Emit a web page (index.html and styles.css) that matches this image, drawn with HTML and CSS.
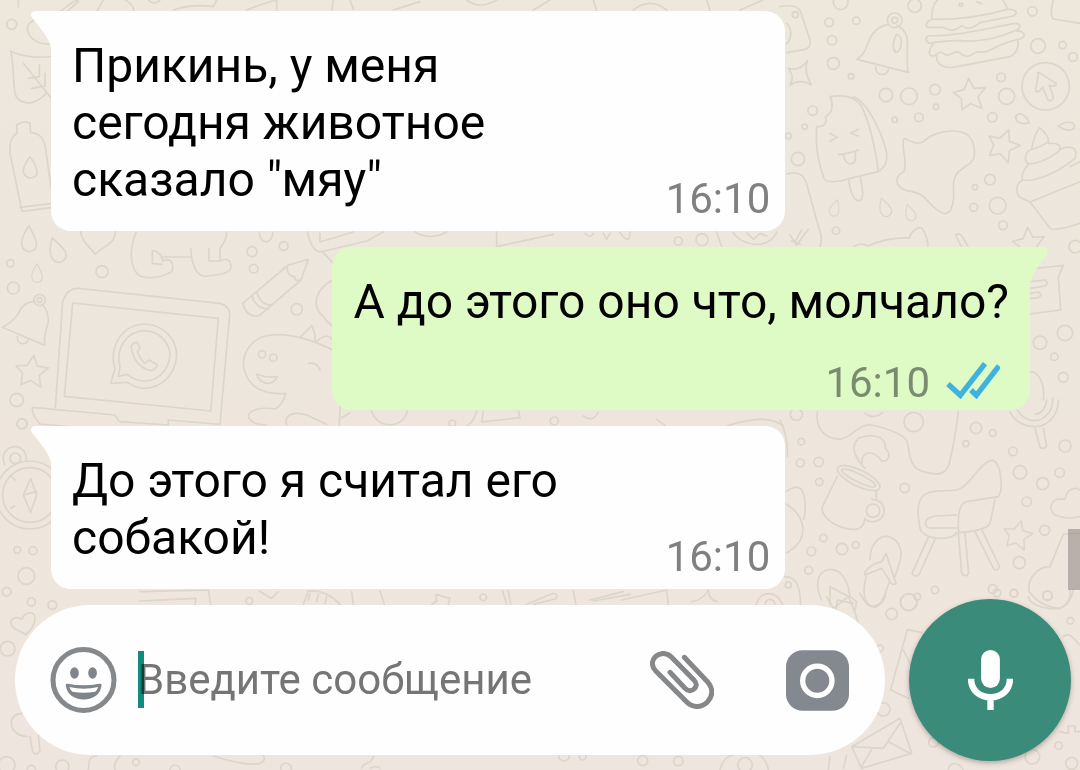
FILE: index.html
```html
<!DOCTYPE html>
<html lang="ru">
<head>
<meta charset="utf-8">
<meta name="viewport" content="width=device-width, initial-scale=1">
<title>Чат</title>
<link rel="stylesheet" href="styles.css">
</head>
<body>
<svg class="wallpaper" viewBox="0 0 3240 2310" preserveAspectRatio="xMidYMid slice" aria-hidden="true">
  <defs>
    <path id="star" d="M-2-48L14-18L48-20L26 8L38 42L4 28L-22 46L-24 12L-48-6L-16-14Z"/>
    <path id="drop" d="M0-40C-14-18-23-4-22 14C-20 32-8 38 2 38C16 36 24 26 22 10C18-8 8-22 0-40Z"/>
  </defs>
  <!-- upper left: leaf, bottle -->
  <g>
    <circle cx="35" cy="73" r="15"/>
    <path d="M55 0V20M165 50C110 48 80 65 82 90C90 120 120 135 150 132M180 35L220 5L235 0M200 35L235 5M290 35L310 0M375 0C395 10 402 20 402 35M445 0C455 12 470 12 480 0M520 30Q580 10 640 20L650 0M740 30Q790 10 830 0V32M1000 0L995 30M1050 0L1060 28M1180 30L1260 5M1400 0Q1440 30 1490 0M1600 30L1650 0M1780 0L1790 32M1900 30Q1950 -10 2000 30M2120 0L2130 32M2220 30L2290 0"/>
    <path d="M32 154Q90 180 160 168M32 154C42 190 38 240 45 280C50 300 70 312 95 308C120 300 130 290 140 278L160 300M70 190L158 300M85 235L118 230V195M95 265L135 258V220"/>
    <path d="M52 400L50 375Q70 360 90 370L92 398M52 400C32 410 28 430 30 460L66 634L160 622M92 398C120 400 130 415 136 440L158 600M60 622L158 610M90 470C75 490 66 510 72 522Q90 545 110 525C114 505 102 485 90 470Z"/>
  </g>
  <!-- upper right: bell, burger, ice cream, cupcake -->
  <g transform="translate(2340 0)">
    <path d="M0 20Q50 10 62 35L90 120Q94 142 75 148L20 158M20 70Q45 100 20 132M25 205Q60 215 82 182Q70 215 94 254Q60 235 30 255Q45 230 25 205"/>
    <circle cx="46" cy="44" r="9"/><circle cx="182" cy="7" r="22"/><circle cx="147" cy="67" r="13"/><circle cx="229" cy="62" r="11"/><circle cx="156" cy="121" r="14"/><circle cx="160" cy="190" r="18"/><circle cx="213" cy="229" r="8"/><circle cx="404" cy="17" r="20"/><circle cx="344" cy="61" r="22"/><circle cx="344" cy="61" r="9"/>
    <path d="M322 74C285 82 270 108 258 145Q250 165 231 178L385 217C375 170 388 130 380 108C372 90 360 80 350 76M287 200C285 230 325 230 325 207M350 102C335 130 338 150 348 158C368 150 370 110 350 102Z"/>
    <path d="M455 58C455 30 462 10 472 0M668 0Q680 15 682 28M455 58Q570 60 682 28C710 26 715 40 700 48L600 68C580 85 560 90 545 76C525 95 505 92 490 82L445 82C432 76 440 66 455 58M445 108C540 108 620 85 705 70C722 70 725 82 710 90Q620 130 540 122Q500 120 450 130C435 126 435 112 445 108M710 92C736 95 740 110 720 117C680 125 650 140 630 150C610 165 600 150 585 158C565 175 550 170 535 155C515 155 505 175 490 160C475 150 465 170 460 168C440 168 448 145 460 132M470 168C468 195 495 208 530 200L690 170C710 160 716 140 714 120"/>
    <path d="M538 10h10v8h-10ZM590 5l15 6"/>
    <circle cx="757" cy="34" r="14"/><circle cx="774" cy="138" r="22"/><circle cx="848" cy="135" r="11"/><circle cx="879" cy="171" r="13"/>
    <path d="M820 0Q808 45 820 57L900 70"/>
    <circle cx="797" cy="259" r="71"/>
    <path d="M775 222Q770 216 778 218L828 250Q830 262 808 256L820 292Q814 308 804 300L788 262Q768 285 767 270Z"/>
    <circle cx="318" cy="285" r="20"/><circle cx="387" cy="289" r="25"/><circle cx="465" cy="269" r="16"/><circle cx="468" cy="320" r="8"/><circle cx="417" cy="352" r="13"/><circle cx="344" cy="359" r="8"/><circle cx="663" cy="232" r="13"/><circle cx="680" cy="289" r="24"/><circle cx="637" cy="352" r="14"/>
    <use href="#star" x="568" y="283"/><use href="#star" transform="translate(668 434) rotate(25)"/>
    <path d="M150 290C200 282 230 295 245 320C270 370 285 440 295 515L210 535C170 548 140 548 132 535C115 490 105 440 110 380C135 382 142 365 136 350C160 340 160 310 150 290M220 290C265 305 310 410 320 460C322 490 315 500 295 515M207 538C208 570 220 605 240 602C255 590 245 560 242 532M150 400L172 412L150 424M235 388L212 400L235 408M176 464Q205 462 235 450M190 464C195 490 208 496 222 488Q230 475 224 455"/>
    <circle cx="98" cy="332" r="14"/><circle cx="74" cy="380" r="8"/><circle cx="54" cy="477" r="20"/><circle cx="25" cy="408" r="9"/>
    <path d="M20 522Q65 510 78 545L124 710Q125 725 120 740M30 705L50 735L85 688M65 690L45 725"/>
    <path d="M372 415C395 425 410 435 430 425C460 395 520 385 555 400C590 420 590 475 570 490C535 515 520 520 520 560C525 620 510 645 490 640C440 620 450 580 380 572C345 560 340 530 372 515C385 480 360 440 372 415Z"/>
    <path d="M707 350C715 335 735 340 748 368C725 375 708 368 707 350ZM835 378C860 360 890 365 882 385C870 395 850 388 835 378Z"/>
    <path d="M755 448Q760 410 778 383Q806 405 806 425Q775 445 755 448C735 455 730 480 745 492Q790 490 835 455C850 435 830 428 806 430M745 494C728 510 724 530 728 540C770 545 830 520 885 475C895 440 870 435 840 448M728 540C705 550 705 585 725 595L750 606Q790 590 900 545M870 500L900 485M750 606L810 685Q825 695 900 670"/>
    <circle cx="630" cy="539" r="16"/><circle cx="585" cy="562" r="8"/><circle cx="581" cy="622" r="12"/><circle cx="653" cy="617" r="25"/><circle cx="669" cy="676" r="13"/><circle cx="168" cy="692" r="11"/><circle cx="886" cy="740" r="19"/>
    <use href="#drop" transform="translate(165 624) rotate(18) scale(.65)"/><use href="#drop" transform="translate(314 622) rotate(-20) scale(.75)"/><use href="#drop" transform="translate(390 638) rotate(-18) scale(.65)"/>
    <use href="#star" x="745" y="730"/>
    <path d="M222 740Q240 725 265 738Q320 712 388 714C395 690 415 680 425 684Q445 710 444 745M527 705Q540 695 550 715L564 740M527 705L545 742"/>
  </g>
  <!-- middle left: drops, dog, laptop, pencil, dinosaur -->
  <g transform="translate(0 675)">
    <use href="#drop" x="87" y="42"/><use href="#drop" transform="translate(170 75) rotate(-20)"/><use href="#drop" transform="translate(111 145) scale(.72)"/>
    <circle cx="31" cy="115" r="11"/><circle cx="40" cy="189" r="18"/><circle cx="306" cy="140" r="18"/>
    <path d="M242 20C245 50 265 60 286 88C305 65 345 60 346 20M408 22C385 80 390 140 425 155C460 165 500 150 515 140C525 115 510 95 488 108C485 85 465 75 457 78V115L485 118M488 96H572M572 70C575 120 590 160 625 153C660 150 680 145 690 135C700 110 680 95 662 108M627 70V108H660V70Q680 45 680 22"/>
    <circle cx="119" cy="225" r="17"/><circle cx="119" cy="225" r="7"/>
    <path d="M103 230C75 228 62 250 55 265Q40 290 7 307L134 361C130 330 140 310 145 290C145 265 138 250 128 240M52 335C50 365 85 358 84 345"/>
    <use href="#star" transform="translate(94 438) rotate(12)"/>
    <circle cx="50" cy="525" r="20"/><circle cx="66" cy="597" r="15"/>
    <path d="M166 548L188 230Q200 190 235 190L660 235Q695 245 688 280L660 598M218 234L655 280L632 558L193 514ZM97 547L345 570L358 590L505 600V585L660 598M97 547Q95 570 120 597L200 604"/>
    <path d="M345 432C325 360 370 298 435 297C495 300 530 345 530 392C525 455 480 490 430 490Q405 488 382 472L332 475ZM360 425C345 370 380 318 435 317C480 320 510 355 510 392C505 440 470 470 430 468Q400 465 382 448L355 454Z"/>
    <path d="M393 365C400 405 420 432 455 437Q470 430 472 420L448 405L434 415Q418 398 412 380L420 370L412 352Q398 352 393 365Z"/>
    <path d="M728 235L865 120L925 103L903 165L778 272Q740 280 728 235ZM755 210Q765 250 805 252M770 200Q780 240 815 240M862 122Q860 155 885 155Q880 170 903 165"/>
    <circle cx="756" cy="80" r="15"/><circle cx="851" cy="63" r="13"/><circle cx="761" cy="131" r="13"/><circle cx="890" cy="253" r="17"/>
    <path d="M778 22C778 60 818 60 818 22M998 165C950 190 930 240 970 275Q980 290 998 305M998 375C940 345 860 320 800 332C745 345 725 395 732 430C745 490 790 510 858 505Q845 545 825 552C780 545 745 555 745 575Q755 600 800 600M900 338L935 302Q945 320 946 347M950 350Q980 320 998 345M925 415Q950 410 960 434M770 447Q800 460 832 455Q820 478 800 475Q775 470 770 447ZM860 600C850 565 890 560 920 570L980 598"/>
    <circle cx="786" cy="388" r="11"/><circle cx="820" cy="398" r="11"/>
  </g>
  <!-- strips between the messages -->
  <g transform="translate(900 678)">
    <path d="M22 18Q35 75 60 78L200 45L250 18M60 22V48L160 18M100 112L70 80M590 18V62L760 25M345 18Q390 45 440 18M855 22Q870 40 880 22M910 22L920 40L930 22M960 20Q990 60 990 18M1250 18L1265 62M1300 20C1330 65 1410 70 1430 18M1340 20L1360 40L1380 22L1400 30M1475 45L1500 55M120 540L118 598M125 575L150 560M215 555C230 610 310 610 322 555M530 555Q520 590 500 600M550 555L545 588L660 575L655 555M850 570Q880 590 895 558M1070 580L1095 598M1280 600Q1400 560 1450 600"/>
    <circle cx="1135" cy="45" r="12"/><circle cx="1206" cy="41" r="18"/><circle cx="457" cy="592" r="10"/><circle cx="763" cy="585" r="12"/>
  </g>
  <!-- middle right: note and swirl beside the reply -->
  <g transform="translate(2340 690)">
    <path d="M770 115L850 106L835 140L842 240L750 252M750 155L795 150Q808 160 795 168L750 175M750 190L775 186Q790 195 775 203L750 206M750 425C785 425 795 480 790 510M835 510C835 560 800 590 765 590C730 590 700 570 690 545M818 505C820 545 790 572 765 572C740 572 720 555 712 540M800 510C795 540 780 552 765 552"/>
    <circle cx="780" cy="338" r="20"/><circle cx="855" cy="309" r="23"/><circle cx="823" cy="380" r="11"/><circle cx="850" cy="442" r="15"/>
  </g>
  <!-- lower right: mug, chair, sandals, guitar -->
  <g transform="translate(2340 1200)">
    <path d="M112 35C105 90 140 120 185 117C220 110 235 70 275 75C320 85 370 100 382 125C390 170 390 205 430 215C480 230 500 220 508 190Q525 120 535 35M255 40Q280 60 308 38"/>
    <circle cx="49" cy="43" r="18"/><circle cx="401" cy="66" r="29"/><circle cx="588" cy="84" r="17"/><circle cx="638" cy="99" r="10"/><circle cx="558" cy="131" r="9"/><circle cx="64" cy="125" r="10"/><circle cx="61" cy="189" r="12"/><circle cx="116" cy="186" r="14"/><circle cx="118" cy="246" r="11"/><circle cx="374" cy="264" r="14"/>
    <path d="M255 205C225 175 210 140 235 115C270 100 320 105 316 145C335 160 325 190 305 182C280 150 245 150 245 190"/>
    <ellipse cx="236" cy="234" rx="70" ry="24" transform="rotate(26 236 234)"/><ellipse cx="236" cy="234" rx="56" ry="12" transform="rotate(26 236 234)"/>
    <path d="M172 228L125 325C130 360 180 390 230 388Q255 380 254 355M288 275L290 298"/>
    <circle cx="279" cy="332" r="20"/><path d="M275 298C300 298 315 315 312 338C305 365 275 372 256 358"/>
    <path d="M530 398C510 425 430 420 420 385C410 330 410 290 445 278C490 265 530 280 550 260C585 230 610 180 640 181C665 195 670 270 655 290L560 305Q530 310 536 398C570 395 620 390 630 370L645 298M530 345L465 348C430 355 430 380 450 384H530M445 412L396 520Q405 535 418 522L465 418M535 400L545 520Q558 535 566 520L555 400M585 395L640 505Q655 518 658 498L605 388"/>
    <circle cx="699" cy="154" r="13"/><circle cx="720" cy="217" r="20"/><circle cx="839" cy="218" r="14"/><circle cx="788" cy="251" r="18"/><circle cx="740" cy="305" r="14"/><circle cx="855" cy="138" r="18"/><circle cx="794" cy="391" r="15"/><circle cx="718" cy="488" r="18"/><circle cx="638" cy="567" r="13"/><circle cx="702" cy="580" r="12"/><circle cx="465" cy="570" r="11"/><circle cx="386" cy="606" r="25"/>
    <use href="#star" transform="translate(712 404) rotate(18) scale(.9)"/>
    <path d="M765 85L780 142Q790 150 800 138L790 85M900 350Q860 360 825 345C800 325 815 290 855 298C860 265 885 260 900 270M900 400L850 402L810 500C770 500 740 540 748 575Q780 620 840 625Q870 615 880 570"/>
    <circle cx="803" cy="587" r="14"/>
    <path d="M18 275C40 260 60 250 72 285Q80 340 70 358M18 312C80 350 90 420 20 458M0 60Q25 110 22 170M15 530C50 530 60 560 62 615"/>
    <circle cx="130" cy="414" r="11"/><circle cx="94" cy="454" r="13"/><circle cx="186" cy="447" r="17"/><circle cx="227" cy="435" r="10"/><circle cx="86" cy="511" r="12"/><circle cx="25" cy="555" r="9"/>
    <path d="M270 480C270 430 300 405 325 410C360 420 370 455 358 490L345 530M255 525C250 510 280 490 305 485L318 460L348 550Q335 560 328 540L305 505ZM258 530C245 580 255 615 275 618C310 620 315 580 328 545M125 600C105 560 110 520 140 510C180 500 205 540 210 590L230 605L225 630M150 615V560L210 592M168 630L172 600L220 610"/>
  </g>
  <!-- lower left: compass -->
  <g transform="translate(0 1260)">
    <circle cx="66" cy="11" r="15"/><circle cx="90" cy="225" r="82"/><circle cx="90" cy="225" r="102"/><circle cx="46" cy="115" r="16"/>
    <path d="M15 135C0 105 20 78 50 80C72 85 82 105 78 124M92 175L110 225L92 277L70 225ZM70 225L110 215M32 265L44 258M45 180L35 170"/>
    <circle cx="52" cy="390" r="10"/><circle cx="99" cy="392" r="12"/><circle cx="79" cy="468" r="25"/><circle cx="20" cy="515" r="13"/><circle cx="94" cy="546" r="12"/><circle cx="157" cy="555" r="13"/>
  </g>
  <!-- around the message field -->
  <g transform="translate(0 1770)">
    <path d="M78 134C60 120 35 120 32 98C35 80 55 80 65 88C75 65 105 60 105 85Q105 110 78 134ZM90 440L98 485Q110 500 120 482L115 435M80 440C45 435 30 415 35 390Q45 370 65 370M265 540C270 520 260 500 290 498M345 540C340 520 350 510 360 498M640 498Q740 530 780 520Q800 510 790 498"/>
    <circle cx="23" cy="176" r="22"/><circle cx="20" cy="525" r="25"/><circle cx="94" cy="538" r="12"/><circle cx="187" cy="530" r="20"/><circle cx="408" cy="517" r="10"/><circle cx="525" cy="540" r="15"/><circle cx="858" cy="535" r="16"/>
  </g>
  <g transform="translate(420 1755)">
    <path d="M0 20L205 15L212 60M0 48L168 40L165 60M358 18Q385 35 395 40L415 20M490 58L505 18Q560 15 600 58M510 25L505 45M535 28L530 50M560 35L555 55M635 20L640 58M720 18L733 58M875 58L890 48L888 28L930 40L925 58M1088 18L1100 58M1105 18L1112 58M1160 58L1240 25Q1260 30 1245 42L1180 58M1300 18L1308 58M1350 45L1450 20M1360 48L1470 28M665 550C670 530 695 540 700 515M690 550Q710 540 720 550"/>
    <circle cx="328" cy="48" r="10"/><circle cx="1030" cy="37" r="10"/><circle cx="1272" cy="512" r="16"/><circle cx="1328" cy="515" r="10"/><circle cx="1508" cy="527" r="15"/>
  </g>
  <g transform="translate(1800 1770)">
    <path d="M65 30L200 0L205 44M275 35Q310 30 325 0Q325 28 350 35M468 44C480 0 530 0 548 44M680 20L700 55L745 20Q760 50 775 100M780 10Q805 60 830 50Q860 30 855 10M965 128L922 118L872 300L925 325M910 180L935 230"/>
    <circle cx="510" cy="42" r="14"/><circle cx="926" cy="37" r="25"/><circle cx="875" cy="72" r="17"/><circle cx="952" cy="20" r="10"/><circle cx="1191" cy="9" r="11"/><circle cx="1241" cy="10" r="11"/><circle cx="1342" cy="17" r="14"/><circle cx="1411" cy="92" r="10"/><circle cx="840" cy="175" r="10"/><circle cx="235" cy="513" r="14"/><circle cx="435" cy="525" r="22"/><circle cx="850" cy="358" r="20"/><circle cx="1000" cy="457" r="14"/><circle cx="1376" cy="467" r="11"/><circle cx="1297" cy="500" r="22"/><circle cx="1415" cy="520" r="18"/>
    <path d="M755 470L900 385L935 490L785 535ZM755 470L850 475L900 400M815 478L785 530M865 455L930 490M690 500L685 540M740 495L730 535M360 540Q370 500 400 495M505 540Q500 510 480 497M1285 20C1290 50 1360 65 1390 50Q1415 30 1410 0M1390 140C1410 120 1430 160 1440 165M1380 425L1405 430V408H1425V425H1440M1045 540C1050 510 1080 520 1090 540"/>
  </g>
</svg>

<div class="chat">
  <main class="messages">
    <article class="bubble incoming">
      <svg class="tail" viewBox="0 0 24 36" aria-hidden="true"><path d="M24 0H5Q0 0 0 4Q0 6 3 9L13 22Q18 29 20 36H24Z"/></svg>
      <p class="text">Прикинь, у меня<br>сегодня животное<br>сказало "мяу"</p>
      <time class="time" datetime="16:10">16:10</time>
    </article>
    <article class="bubble outgoing">
      <svg class="tail" viewBox="0 0 24 36" aria-hidden="true"><path d="M0 0H18Q23 1 21 6Q20 9 17 13L11 21Q6 28 4 36H0Z"/></svg>
      <p class="text">А до этого оно что, молчало?</p>
      <div class="status">
        <time class="time" datetime="16:10">16:10</time>
        <svg class="ticks" viewBox="498 396 160 111" role="img" aria-label="Прочитано"><path d="M503 462L540 496L614 401M572 480L588 496L656 408"/></svg>
      </div>
    </article>
    <article class="bubble incoming">
      <svg class="tail" viewBox="0 0 24 36" aria-hidden="true"><path d="M24 0H5Q0 0 0 4Q0 6 3 9L13 22Q18 29 20 36H24Z"/></svg>
      <p class="text">До этого я считал его<br>собакой!</p>
      <time class="time" datetime="16:10">16:10</time>
    </article>
  </main>

  <form class="composer">
    <div class="field">
      <button class="icon-button" type="button" aria-label="Эмодзи">
        <svg class="emoji" viewBox="150 173 200 196">
          <circle cx="250" cy="271" r="91" fill="none" stroke="#85898c" stroke-width="15"/>
          <ellipse cx="223" cy="250" rx="13" ry="17"/><ellipse cx="277" cy="250" rx="13" ry="17"/>
          <path d="M197 286Q197 281 203 282Q250 292 298 282Q304 281 304 286C301 314 280 329 251 329S200 314 197 286Z"/>
          <path d="M208 292Q250 302 294 292Q291 301 285 306Q250 312 217 306Q210 300 208 292Z" fill="#fff"/>
        </svg>
      </button>
      <div class="entry">
        <input class="input" type="text" placeholder="Введите сообщение" aria-label="Введите сообщение">
        <span class="caret"></span>
      </div>
      <button class="icon-button" type="button" aria-label="Прикрепить">
        <svg class="clip" viewBox="30 63 192 174"><path d="M133 82L203 156C221 176 218 200 203 215C184 234 158 234 141 217L48 124C34 110 34 92 46 80C60 67 80 67 94 81L161 149C171 160 171 168 163 176C155 185 144 184 135 175L90 127"/></svg>
      </button>
      <button class="icon-button" type="button" aria-label="Камера">
        <svg class="camera" viewBox="0 0 189 182"><rect width="189" height="182" rx="50"/><circle cx="94" cy="92" r="44" fill="none" stroke="#fff" stroke-width="16"/></svg>
      </button>
    </div>
    <button class="mic-button" type="button" aria-label="Голосовое сообщение">
      <svg class="mic" viewBox="1104 178 134 179"><rect x="1143" y="178" width="56" height="113" rx="28"/><path d="M1113 264C1113 298 1139 319 1171 319S1229 298 1229 264M1171 319V357" fill="none" stroke="#fff" stroke-width="19"/></svg>
    </button>
  </form>
</div>
<div class="scroll-thumb"></div>
</body>
</html>
```

FILE: styles.css
```css
* {
  box-sizing: border-box;
}

body {
  margin: 0;
  position: relative;
  min-height: 100vh;
  overflow-x: hidden;
  background: linear-gradient(#ede7dc, #eee6dc 55%, #efe5df);
  font-family: Roboto, "Noto Sans", sans-serif;
}

.wallpaper {
  position: absolute;
  inset: 0;
  width: 100%;
  height: 100%;
  fill: none;
  stroke: #dcd5c9;
  stroke-width: 5;
  stroke-linejoin: round;
  stroke-linecap: round;
}

.chat {
  position: relative;
  min-height: 100vh;
  display: flex;
  flex-direction: column;
  justify-content: space-between;
  gap: 9px;
  padding: 11px 9px 9px 15px;
}

.messages {
  display: flex;
  flex-direction: column;
  gap: 16px;
  padding: 0 41px 0 36px;
}

.bubble {
  position: relative;
  display: flex;
  border-radius: 20px;
}

.incoming {
  align-self: flex-start;
  width: 75%;
  min-width: 560px;
  justify-content: space-between;
  align-items: flex-end;
  padding: 26px 15px 8px 21px;
  border-top-left-radius: 0;
  background: #fefefe;
}

.incoming .text {
  padding-bottom: 15px;
}

.outgoing {
  align-self: flex-end;
  flex-direction: column;
  gap: 29px;
  padding: 26px 21px 3px 21px;
  border-top-right-radius: 0;
  background: #defac5;
}

.tail {
  position: absolute;
  top: 0;
  width: 24px;
  height: 36px;
}

.incoming .tail {
  right: calc(100% - 4px);
  fill: #fefefe;
}

.outgoing .tail {
  left: calc(100% - 4px);
  fill: #defac5;
}

.text {
  margin: 0;
  color: #000;
  font-size: 48px;
  line-height: 57px;
}

.time {
  color: #808080;
  font-size: 42px;
  line-height: 48px;
}

.status {
  display: flex;
  justify-content: flex-end;
  align-items: flex-start;
  gap: 16px;
  padding-right: 9px;
}

.outgoing .time {
  color: #7b8b70;
}

.ticks {
  width: 54px;
  height: 37px;
  margin-top: 3px;
  fill: none;
  stroke: #3fb2e0;
  stroke-width: 16;
}

.composer {
  display: flex;
  align-items: center;
  gap: 24px;
}

.field {
  flex: 1;
  min-width: 0;
  display: flex;
  align-items: center;
  height: 150px;
  padding: 0 36px 0 35px;
  border-radius: 75px;
  background: #fefefe;
}

.icon-button {
  display: flex;
  flex: none;
  padding: 0;
  border: 0;
  background: none;
}

.emoji {
  width: 67px;
  height: 66px;
  fill: #7f858a;
}

.entry {
  position: relative;
  flex: 1;
  min-width: 0;
  margin: 0 24px 0 21px;
}

.input {
  display: block;
  width: 100%;
  height: 58px;
  padding: 0;
  border: 0;
  outline: 0;
  background: none;
  color: #000;
  font-family: inherit;
  font-size: 42px;
  line-height: 58px;
}

.input::placeholder {
  color: #757575;
  opacity: 1;
}

.caret {
  position: absolute;
  top: 0;
  left: 0;
  width: 6px;
  height: 57px;
  background: #128c7e;
  mix-blend-mode: multiply;
}

.clip {
  width: 64px;
  height: 58px;
  margin-right: 72px;
  fill: none;
  stroke: #858788;
  stroke-width: 15;
  stroke-linecap: round;
}

.camera {
  width: 63px;
  height: 61px;
  fill: #84888f;
}

.mic-button {
  display: flex;
  flex: none;
  align-items: center;
  justify-content: center;
  width: 162px;
  height: 162px;
  padding: 0;
  border: 0;
  border-radius: 50%;
  background: #3a8b79;
  box-shadow: 0 2px 5px rgba(60, 50, 40, 0.35);
}

.mic {
  width: 45px;
  height: 60px;
  fill: #fff;
}

.scroll-thumb {
  position: absolute;
  top: 529px;
  right: 0;
  width: 12px;
  height: 61px;
  background: rgba(140, 132, 128, 0.55);
}
```
